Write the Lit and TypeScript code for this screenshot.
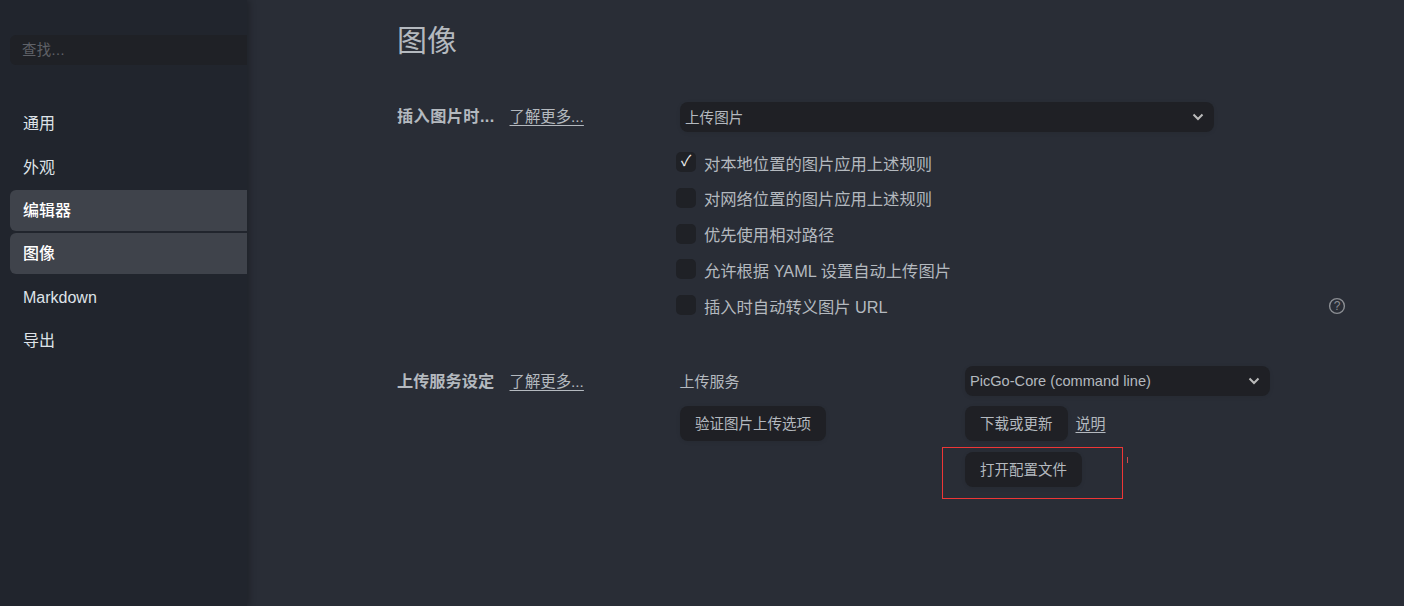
import { LitElement, html, css } from "lit";
import { customElement } from "lit/decorators.js";

const chevron = html`<svg class="chev" viewBox="0 0 12 8" width="12" height="8"><path d="M1.5 1.5 6 6l4.5-4.5" fill="none" stroke="#bbb" stroke-width="2"/></svg>`;

@customElement("app-root")
export class AppRoot extends LitElement {
  static styles = css`
    :host { display: block; width: 1404px; height: 606px; overflow: hidden; background: #292d36; color: #b4b9bf;
      font-family: "Liberation Sans", "Noto Sans CJK SC", sans-serif; font-size: 16px; position: relative; }
    * { box-sizing: border-box; }
    .page { display: flex; height: 606px; }
    .side { width: 247px; flex: none; background: #21252d; padding: 35px 0 0 10px; display: flex; flex-direction: column;
      box-shadow: 3px 0 6px rgba(0,0,0,.22); z-index: 1; }
    .search { height: 30px; background: #1f2126; border-radius: 6px 0 0 6px; padding-left: 12px; color: #5f6268; font-size: 14.4px; letter-spacing: .4px; line-height: 30px; margin-bottom: 38.1px; }
    .nav { height: 41px; margin-bottom: 2.45px; padding-left: 13px; line-height: 42.6px; color: #dfe3e8; border-radius: 6px 0 0 6px; }
    .nav.sel { background: #3f434b; color: #fff; font-weight: 500; }
    main { flex: 1; padding: 20px 0 0 150px; min-width: 0; }
    h1 { margin: 0 0 40px; font-size: 30px; font-weight: 400; line-height: 42px; color: #b4b9bf; }
    .sec { display: grid; grid-template-columns: 283px 1fr; }
    .sec + .sec { margin-top: 37.5px; }
    .sec + .sec .head { padding-top: 1px; }
    .head { display: flex; align-items: flex-start; gap: 14px; font-size: 16.2px; line-height: 29px; }
    .head b { font-weight: 700; width: 98.5px; white-space: nowrap; }
    .head b.wider { letter-spacing: .4px; }
    .head a { font-size: 15.4px; }
    a { color: inherit; text-decoration: underline; text-underline-offset: 3px; }
    .select { height: 30px; background: #1f2025; border-radius: 8px; display: flex; align-items: center; justify-content: space-between;
      padding: 0 10px 0 5px; font-size: 14.6px; color: #b4b9bf; box-shadow: 0 1px 4px rgba(0,0,0,.08); }
    .wide { width: 534px; margin-bottom: 17.5px; }
    .wide span { margin-bottom: 2px; }
    .checks { display: flex; flex-direction: column; margin-left: -4px; position: relative; width: 670px; }
    .check { height: 35.8px; display: flex; align-items: flex-start; gap: 8px; line-height: 28px; white-space: nowrap; font-size: 16.3px; }
    .box { width: 20px; height: 20px; margin-top: 2.5px; background: #1f2126; border-radius: 5px; color: #f2f2f2; font-size: 15px; line-height: 17px; text-align: center; flex: none; }
    .help { position: absolute; right: 0; bottom: 13px; }
    .grid2 { display: grid; grid-template-columns: 285px 305px; row-gap: 10px; align-items: start; }
    .lbl { font-size: 15px; height: 30px; line-height: 31px; margin-left: -.5px; }
    .btn { display: block; width: fit-content; height: 35px; line-height: 36px; padding: 0 15px; background: #1f2025; border-radius: 8px; font-size: 14.5px; color: #b4b9bf; box-shadow: 0 1px 4px rgba(0,0,0,.08); white-space: nowrap; }
    .row { display: flex; gap: 8px; align-items: center; font-size: 15px; }
    .row a { padding-bottom: 2px; }
    .third { margin-top: 1px; }
    .anno { position: absolute; left: 942px; top: 447px; width: 181px; height: 52px; border: 1px solid #ee3636; }
    .tick { position: absolute; left: 1127px; top: 457px; width: 1px; height: 6px; background: #c94a4a; }
  `;

  render() {
    const nav = [["通用", false], ["外观", false], ["编辑器", true], ["图像", true], ["Markdown", false], ["导出", false]] as const;
    const checks = ["对本地位置的图片应用上述规则", "对网络位置的图片应用上述规则", "优先使用相对路径", "允许根据 YAML 设置自动上传图片", "插入时自动转义图片 URL"];
    return html`
      <div class="page">
        <aside class="side">
          <div class="search">查找...</div>
          ${nav.map(([t, s]) => html`<div class="nav ${s ? "sel" : ""}">${t}</div>`)}
        </aside>
        <main>
          <h1>图像</h1>
          <section class="sec">
            <div class="head"><b class="wider">插入图片时...</b><a>了解更多...</a></div>
            <div>
              <div class="select wide"><span>上传图片</span>${chevron}</div>
              <div class="checks">
                ${checks.map((c, i) => html`<div class="check"><span class="box">${i === 0 ? "✓" : ""}</span><span>${c}</span></div>`)}
                <svg class="help" width="18" height="18" viewBox="0 0 18 18"><circle cx="9" cy="9" r="7.4" fill="none" stroke="#8b8e93" stroke-width="1.4"/><text x="9" y="13.2" text-anchor="middle" font-size="12" fill="#8b8e93" font-family="Liberation Sans">?</text></svg>
              </div>
            </div>
          </section>
          <section class="sec">
            <div class="head"><b>上传服务设定</b><a>了解更多...</a></div>
            <div class="grid2">
              <div class="lbl">上传服务</div>
              <div class="select"><span>PicGo-Core (command line)</span>${chevron}</div>
              <div><span class="btn">验证图片上传选项</span></div>
              <div class="row"><span class="btn">下载或更新</span><a>说明</a></div>
              <div></div>
              <div class="third"><span class="btn">打开配置文件</span></div>
            </div>
          </section>
        </main>
      </div>
      <div class="anno"></div><div class="tick"></div>
    `;
  }
}
